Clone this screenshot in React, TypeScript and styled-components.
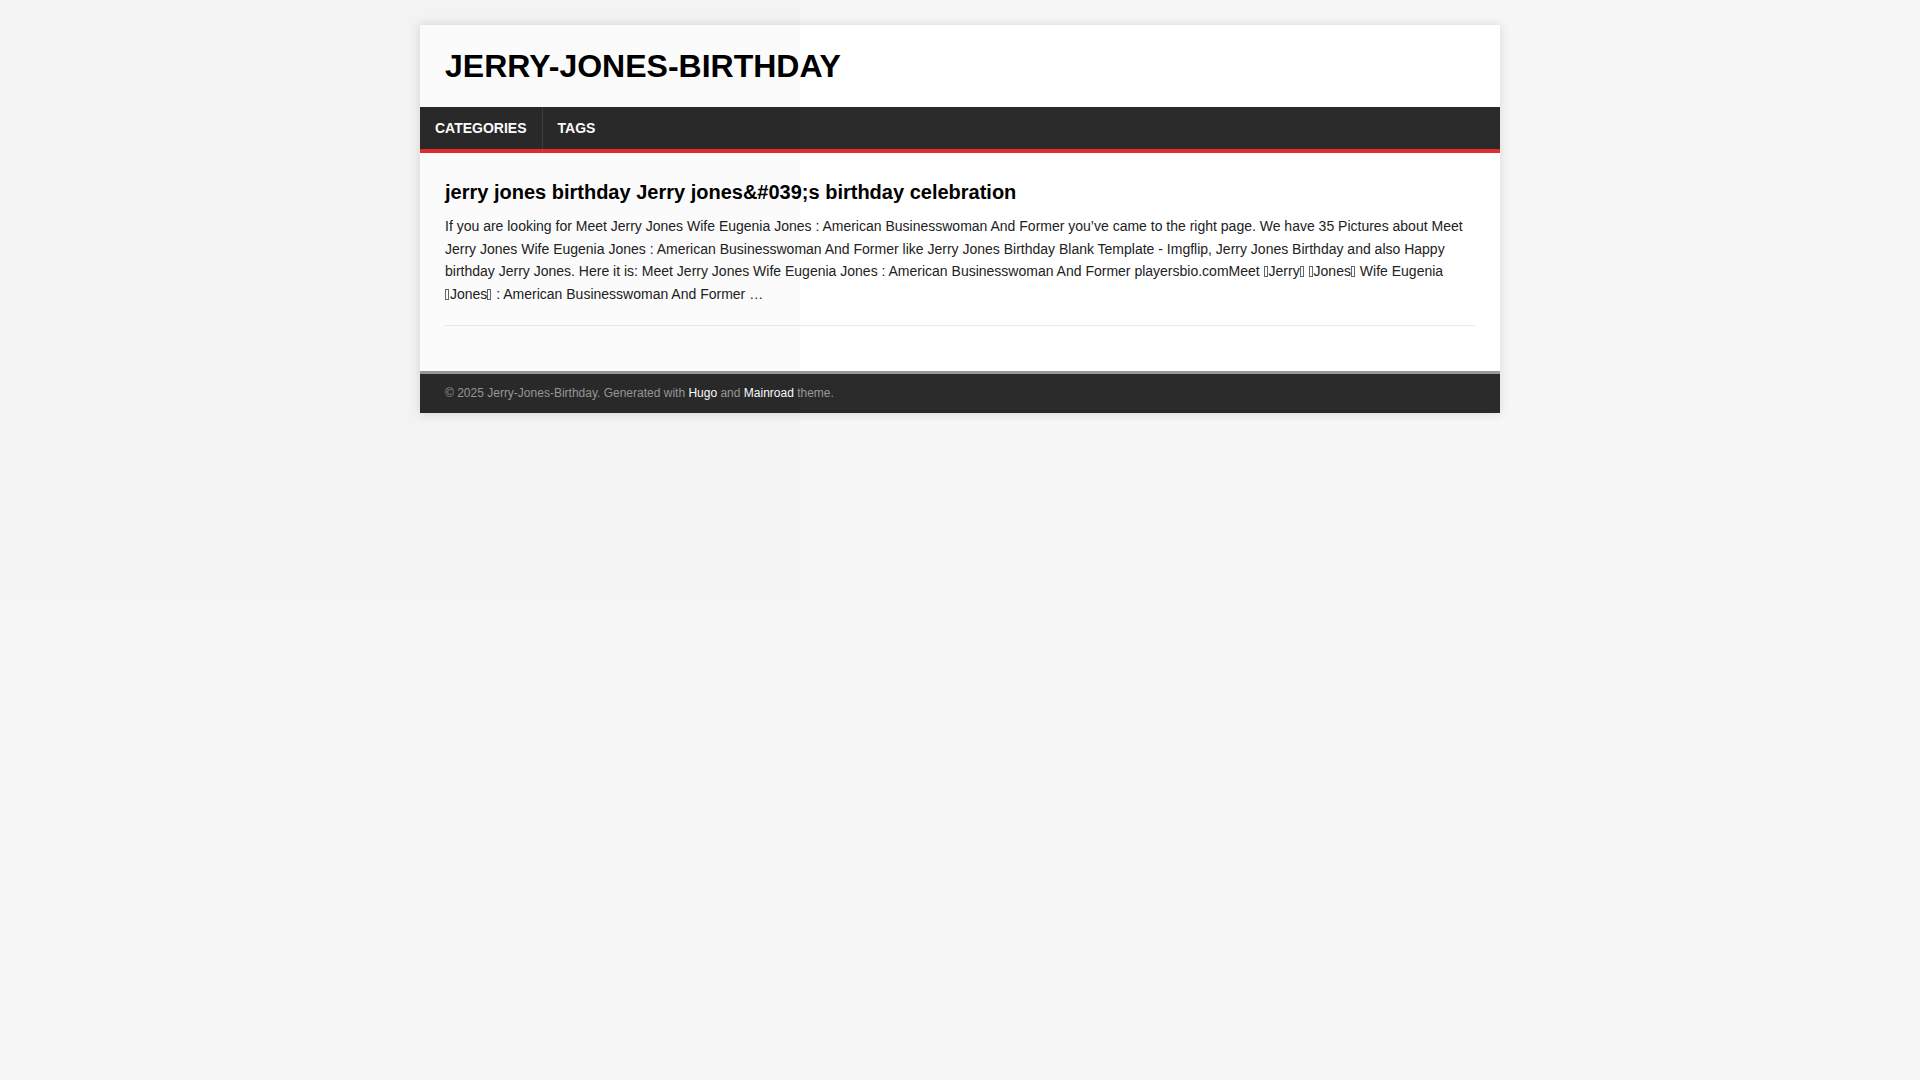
import React from "react";
import styled, { createGlobalStyle } from "styled-components";

const GlobalStyle = createGlobalStyle`
  html, body {
    margin: 0;
    padding: 0;
  }
  body {
    background: #f7f7f7;
    color: #222;
    font-family: "Liberation Sans", Arial, Helvetica, sans-serif;
    font-size: 15px;
    line-height: 1.6;
    -webkit-font-smoothing: antialiased;
  }
  a {
    text-decoration: none;
  }
`;

const Page = styled.div`
  position: relative;
  min-height: 1080px;
  padding: 25px 0;
  box-sizing: border-box;
`;

const Shade = styled.div`
  position: absolute;
  top: 0;
  left: 0;
  width: 800px;
  height: 600px;
  background: rgba(0, 0, 0, 0.016);
  pointer-events: none;
  z-index: 5;
`;

const Outer = styled.div`
  max-width: 1080px;
  margin: 0 auto;
  background: #fff;
  box-shadow: 0 0 10px rgba(50, 50, 50, 0.17);
`;

const Header = styled.header`
  padding: 25px;
  background: #fff;
`;

const Logo = styled.a`
  display: block;
  color: #000;
  font-size: 32px;
  font-weight: 700;
  line-height: 32px;
  text-transform: uppercase;
`;

const Menu = styled.nav`
  display: flex;
  background: #2a2a2a;
  border-bottom: 4px solid #e22d30;
`;

const MenuLink = styled.a<{ $first?: boolean }>`
  display: block;
  padding: 11px 15px;
  color: #fff;
  font-size: 14px;
  font-weight: 700;
  line-height: 20px;
  text-transform: uppercase;
  border-left: ${(p) => (p.$first ? "0" : "1px solid rgba(255, 255, 255, 0.1)")};
`;

const Main = styled.main`
  padding: 26px 25px 25px;
`;

const Item = styled.article`
  padding-bottom: 20px;
  margin-bottom: 20px;
  border-bottom: 1px solid #ebebeb;
`;

const ItemTitle = styled.h2`
  margin: 0 0 10px;
  color: #000;
  font-size: 20px;
  font-weight: 700;
  line-height: 26px;
`;

const Excerpt = styled.p`
  margin: 0;
  color: #222;
  font-size: 14px;
  line-height: 22.6px;
`;

const Word = styled.span`
  white-space: nowrap;
`;

const Tofu = styled.span`
  display: inline-block;
  box-sizing: border-box;
  width: 4px;
  height: 11px;
  margin: 0 1px 0 0;
  border: 1px solid #666;
  vertical-align: -1px;
`;

const Footer = styled.footer`
  padding: 10px 25px 11px;
  background: #2a2a2a;
  border-top: 3px solid #999;
  color: #999;
  font-size: 12px;
  line-height: 18px;
`;

const FooterLink = styled.a`
  color: #fff;
`;

function Boxed({ text }: { text: string }) {
  return (
    <Word>
      <Tofu />
      {text}
      <Tofu />
    </Word>
  );
}

export default function App() {
  return (
    <>
      <GlobalStyle />
      <Page>
        <Shade />
        <Outer>
          <Header>
            <Logo href="#">Jerry-Jones-Birthday</Logo>
          </Header>
          <Menu>
            <MenuLink href="#" $first>
              Categories
            </MenuLink>
            <MenuLink href="#">Tags</MenuLink>
          </Menu>
          <Main>
            <Item>
              <ItemTitle>jerry jones birthday Jerry jones&amp;#039;s birthday celebration</ItemTitle>
              <Excerpt>
                If you are looking for Meet Jerry Jones Wife Eugenia Jones : American Businesswoman And Former
                you’ve came to the right page. We have 35 Pictures about Meet Jerry Jones Wife Eugenia Jones :
                American Businesswoman And Former like Jerry Jones Birthday Blank Template - Imgflip, Jerry Jones
                Birthday and also Happy birthday Jerry Jones. Here it is: Meet Jerry Jones Wife Eugenia Jones :
                American Businesswoman And Former playersbio.comMeet <Boxed text="Jerry" /> <Boxed text="Jones" />{" "}
                Wife Eugenia <Boxed text="Jones" /> : American Businesswoman And Former …
              </Excerpt>
            </Item>
          </Main>
          <Footer>
            © 2025 Jerry-Jones-Birthday. Generated with <FooterLink href="#">Hugo</FooterLink> and{" "}
            <FooterLink href="#">Mainroad</FooterLink> theme.
          </Footer>
        </Outer>
      </Page>
    </>
  );
}
